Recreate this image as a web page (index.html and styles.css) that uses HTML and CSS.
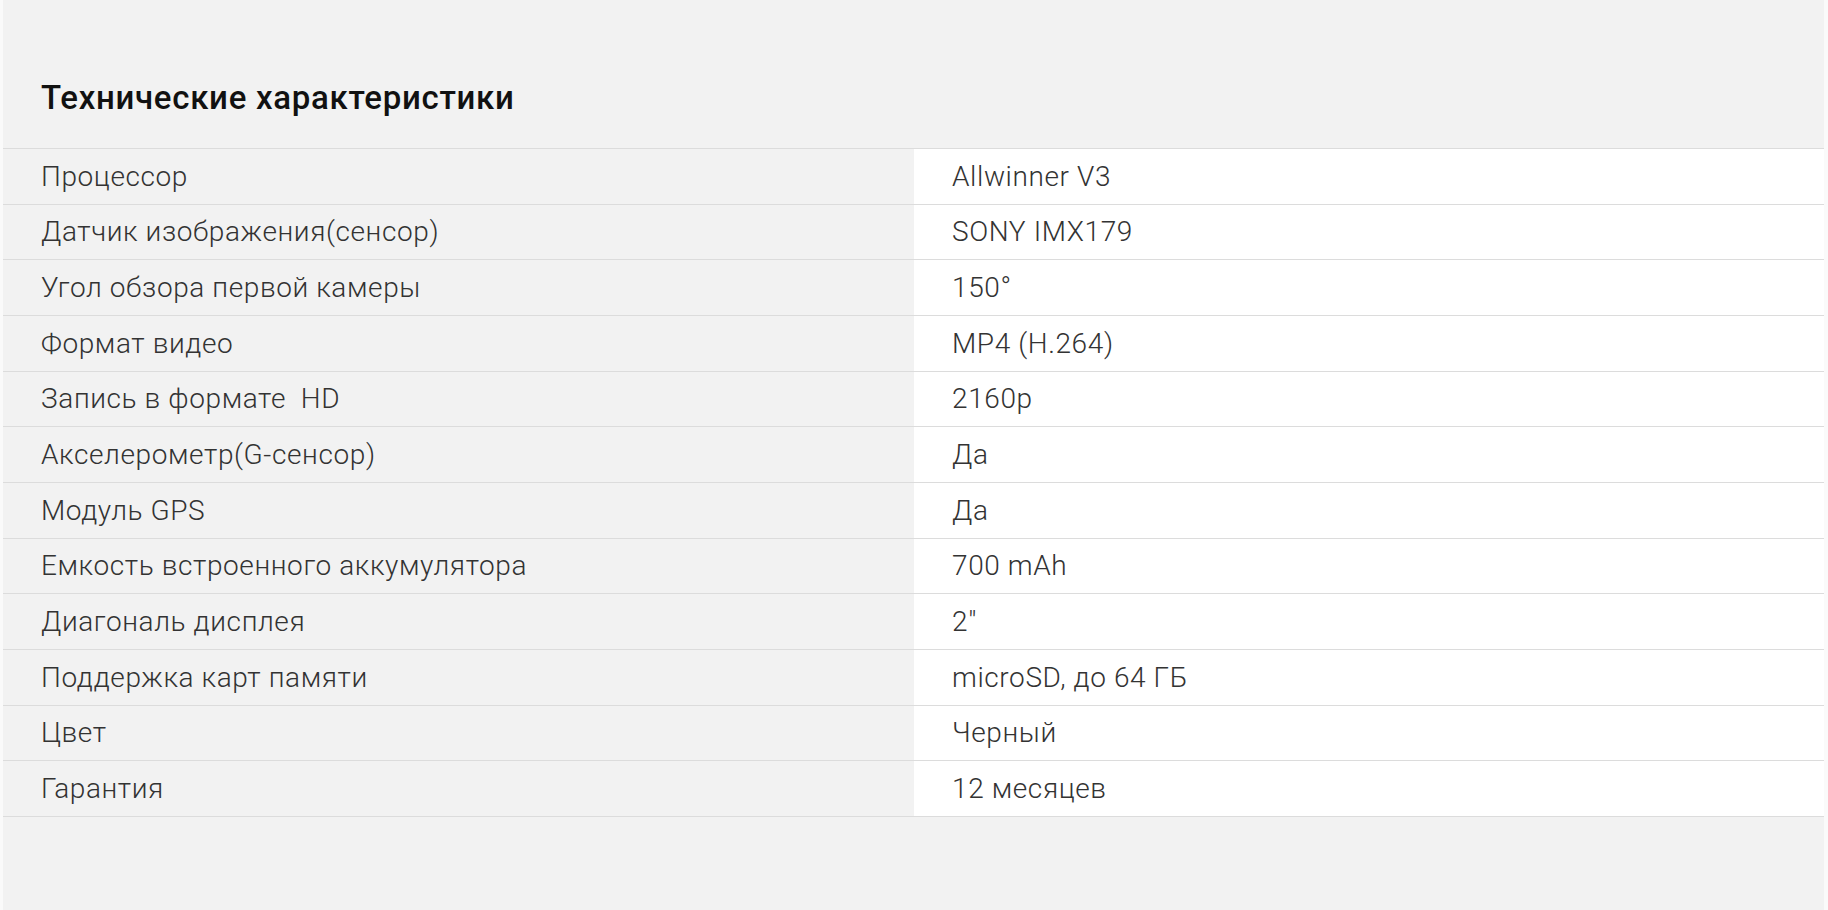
FILE: index.html
```html
<!DOCTYPE html>
<html lang="ru">
<head>
<meta charset="utf-8">
<title>Технические характеристики</title>
<link rel="stylesheet" href="styles.css">
</head>
<body>
<div class="page">
  <h2 class="title">Технические характеристики</h2>
  <div class="specs">
    <div class="row"><div class="name">Процессор</div><div class="val">Allwinner V3</div></div>
    <div class="row"><div class="name">Датчик изображения(сенсор)</div><div class="val">SONY IMX179</div></div>
    <div class="row"><div class="name">Угол обзора первой камеры</div><div class="val">150°</div></div>
    <div class="row"><div class="name">Формат видео</div><div class="val">MP4 (H.264)</div></div>
    <div class="row"><div class="name">Запись в формате&nbsp; HD</div><div class="val">2160p</div></div>
    <div class="row"><div class="name">Акселерометр(G-сенсор)</div><div class="val">Да</div></div>
    <div class="row"><div class="name">Модуль GPS</div><div class="val">Да</div></div>
    <div class="row"><div class="name">Емкость встроенного аккумулятора</div><div class="val">700 mAh</div></div>
    <div class="row"><div class="name">Диагональ дисплея</div><div class="val">2″</div></div>
    <div class="row"><div class="name">Поддержка карт памяти</div><div class="val">microSD, до 64 ГБ</div></div>
    <div class="row"><div class="name">Цвет</div><div class="val">Черный</div></div>
    <div class="row"><div class="name">Гарантия</div><div class="val">12 месяцев</div></div>
  </div>
</div>
</body>
</html>
```
FILE: styles.css
```css
html, body {
  margin: 0;
  padding: 0;
  background: #fafafa;
}
.page {
  margin: 0 4px 0 3px;
  height: 910px;
  background: #f2f2f2;
  font-family: Roboto, "Noto Sans", sans-serif;
  box-sizing: border-box;
  padding-top: 79px;
}
.title {
  margin: 0;
  padding-left: 38px;
  height: 69px;
  font-size: 33px;
  font-weight: 500;
  letter-spacing: 0.7px;
  color: #111;
  line-height: 38px;
  border-bottom: 1px solid #dcdcdc;
}
.specs {
  display: flex;
  flex-direction: column;
}
.row {
  display: grid;
  grid-template-columns: 911px 1fr;
  height: 55.67px;
  box-sizing: border-box;
  border-bottom: 1px solid #dcdcdc;
}
.name, .val {
  display: flex;
  align-items: center;
  padding-left: 38px;
  font-size: 28px;
  font-weight: 300;
  color: #333;
  letter-spacing: 0.6px;
}
.name {
  background: #f2f2f2;
}
.val {
  background: #ffffff;
}
```
